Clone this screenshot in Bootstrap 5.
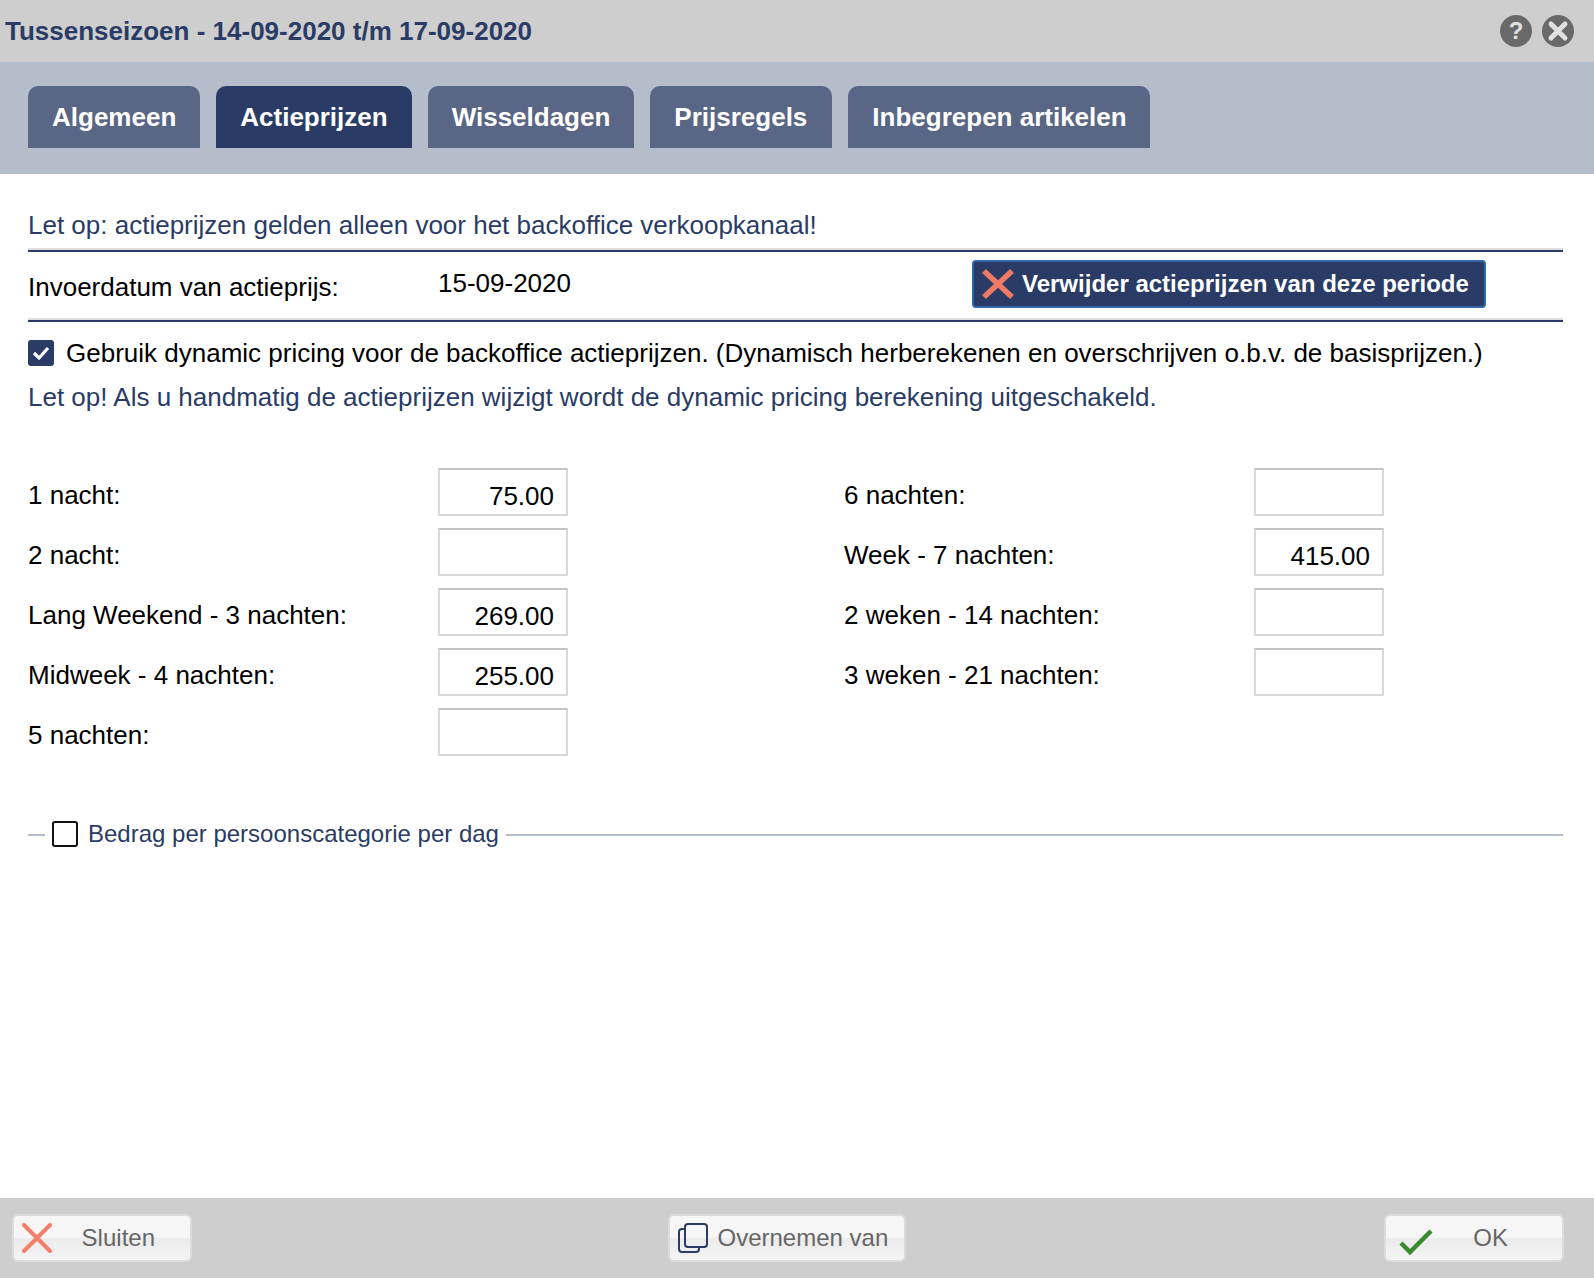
<!DOCTYPE html>
<html lang="nl">
<head>
<meta charset="utf-8">
<title>Tussenseizoen</title>
<link href="https://cdn.jsdelivr.net/npm/bootstrap@5.3.0/dist/css/bootstrap.min.css" rel="stylesheet">
<style>
html,body{margin:0;padding:0;background:#fff}
body{font-family:"Liberation Sans",Arial,sans-serif;color:#000;width:1594px;height:1278px;overflow:hidden;font-size:26px;line-height:30px}
.dlg{width:1594px;height:1278px}
.titlebar{height:62px;background:#cecece;padding:0 20px 0 5px}
.dlg-title{font-size:26px;font-weight:700;color:#2a3c66;margin:0;line-height:62px}
.iconpair{gap:10px}
.round-ic{width:32px;height:32px;border-radius:50%;background:#696969;color:#e0e0e0;font-weight:700;font-size:24px;line-height:32px;text-align:center}
.tabband{height:112px;background:#b5bdcb;padding:24px 28px 0;gap:16px}
.tabitem{height:62px;background:#596685;color:#fff;font-size:26px;font-weight:700;line-height:62px;padding:0 24px;border-radius:10px 10px 0 0}
.tabitem.is-on{background:#2a3c66}
.tabitem.tab-wider{padding-right:25px}
.tabitem.tab-narrower{padding-right:23px}
.pane{padding:0 31px 0 28px}
.note{color:#2a3c66}
.first-note{height:78px;padding-top:36px;border-bottom:2px solid #2a3c66;box-shadow:inset 0 -2px 0 #dedede}
.daterow{height:70px;border-bottom:2px solid #2a3c66;box-shadow:inset 0 -2px 0 #dedede}
.lab{width:410px;flex:none;padding-top:6px}
.datelab{padding-top:2px}
.dateval{width:534px;flex:none;margin-top:-6px}
.delbtn{width:514px;height:48px;margin-bottom:4px;background:#2a3c66;border:2px solid #2f69a8;border-radius:4px;color:#fff;font-weight:700;font-size:24px;padding:0 0 0 8px;gap:8px;white-space:nowrap}
.chk{width:26px;height:26px;flex:none;background:#2a3c66;border-radius:3px}
.dynrow{padding-top:16px;gap:12px;height:46px;white-space:nowrap}
.warn2{margin-top:14px}
.pricegrid{margin-top:56px;row-gap:12px;display:grid;grid-template-columns:816px 1fr}
.pricerow{height:48px}
.pricefield{width:130px;height:48px;border:2px solid #d8d8d8;border-top-color:#c4c4c4;background:#fff;text-align:right;padding:7px 12px 0 0;line-height:38px;border-radius:0}
.lg{margin-top:63px;gap:7px}
.lgline{height:2px;background:#b5bdcb;margin-top:2px}
.lgline-short{width:17px;flex:none}
.lgbox{width:26px;height:26px;flex:none;border:2px solid #111;border-radius:3px;background:#fff}
.lgtext{font-size:24px;color:#2a3c66;white-space:nowrap;margin-left:3px}
.footbar{height:80px;background:#cecece;padding:16px 30px 0 12px}
.fbtn{height:48px;border:2px solid #dcdcdc;border-radius:6px;background:linear-gradient(#f6f6f6 0,#f6f6f6 50%,#ebebeb 50%,#f4f4f4 100%);color:#666;font-size:24px;padding:0;white-space:nowrap}
.fbtn-close{width:180px}
.fbtn-copy{width:238px;margin-right:3px}
.fbtn-ok{width:180px}
.close-label{margin-left:auto;margin-right:35px}
.copy-label{margin-left:10px}
.ok-svg{margin-left:13px;margin-top:8px}
.ok-label{margin-left:auto;margin-right:54px}
</style>
</head>
<body>
<div class="dlg d-flex flex-column">
  <div class="titlebar d-flex justify-content-between align-items-center">
    <h1 class="dlg-title">Tussenseizoen - 14-09-2020 t/m 17-09-2020</h1>
    <div class="iconpair d-flex">
      <div class="round-ic">?</div>
      <div class="round-ic d-flex align-items-center justify-content-center">
        <svg width="22" height="22" viewBox="0 0 22 22"><path d="M4 4 18 18M18 4 4 18" stroke="#e0e0e0" stroke-width="5" stroke-linecap="round"/></svg>
      </div>
    </div>
  </div>
  <div class="tabband d-flex">
    <div class="tabitem">Algemeen</div>
    <div class="tabitem is-on">Actieprijzen</div>
    <div class="tabitem">Wisseldagen</div>
    <div class="tabitem tab-wider">Prijsregels</div>
    <div class="tabitem tab-narrower">Inbegrepen artikelen</div>
  </div>
  <div class="pane flex-grow-1">
    <div class="note first-note">Let op: actieprijzen gelden alleen voor het backoffice verkoopkanaal!</div>
    <div class="daterow d-flex align-items-center">
      <div class="lab datelab">Invoerdatum van actieprijs:</div>
      <div class="dateval">15-09-2020</div>
      <button type="button" class="delbtn d-flex align-items-center">
        <svg width="32" height="30" viewBox="0 0 32 30"><path d="M2 2 30 28M30 2 2 28" stroke="#ef7a66" stroke-width="5.5"/></svg>
        Verwijder actieprijzen van deze periode
      </button>
    </div>
    <div class="dynrow d-flex align-items-center">
      <div class="chk d-flex align-items-center justify-content-center">
        <svg width="18" height="16" viewBox="0 0 18 16"><path d="M2 8 7 13 16 3" fill="none" stroke="#fff" stroke-width="3.2"/></svg>
      </div>
      <div>Gebruik dynamic pricing voor de backoffice actieprijzen. (Dynamisch herberekenen en overschrijven o.b.v. de basisprijzen.)</div>
    </div>
    <div class="note warn2">Let op! Als u handmatig de actieprijzen wijzigt wordt de dynamic pricing berekening uitgeschakeld.</div>
    <div class="pricegrid">
      <div class="pricerow d-flex align-items-center"><div class="lab">1 nacht:</div><div class="pricefield">75.00</div></div>
      <div class="pricerow d-flex align-items-center"><div class="lab">6 nachten:</div><div class="pricefield"></div></div>
      <div class="pricerow d-flex align-items-center"><div class="lab">2 nacht:</div><div class="pricefield"></div></div>
      <div class="pricerow d-flex align-items-center"><div class="lab">Week - 7 nachten:</div><div class="pricefield">415.00</div></div>
      <div class="pricerow d-flex align-items-center"><div class="lab">Lang Weekend - 3 nachten:</div><div class="pricefield">269.00</div></div>
      <div class="pricerow d-flex align-items-center"><div class="lab">2 weken - 14 nachten:</div><div class="pricefield"></div></div>
      <div class="pricerow d-flex align-items-center"><div class="lab">Midweek - 4 nachten:</div><div class="pricefield">255.00</div></div>
      <div class="pricerow d-flex align-items-center"><div class="lab">3 weken - 21 nachten:</div><div class="pricefield"></div></div>
      <div class="pricerow d-flex align-items-center"><div class="lab">5 nachten:</div><div class="pricefield"></div></div>
    </div>
    <div class="lg d-flex align-items-center">
      <div class="lgline lgline-short"></div>
      <div class="lgbox"></div>
      <div class="lgtext">Bedrag per persoonscategorie per dag</div>
      <div class="lgline flex-grow-1"></div>
    </div>
  </div>
  <div class="footbar d-flex justify-content-between">
    <button type="button" class="fbtn fbtn-close d-flex align-items-center">
      <svg class="ms-2" width="30" height="30" viewBox="0 0 30 30"><path d="M2 2 28 28M28 2 2 28" stroke="#f47f68" stroke-width="4" stroke-linecap="round"/></svg>
      <span class="close-label">Sluiten</span>
    </button>
    <button type="button" class="fbtn fbtn-copy d-flex align-items-center">
      <svg class="ms-2" width="30" height="30" viewBox="0 0 30 30" fill="none" stroke="#2a3c66" stroke-width="2"><rect x="7" y="1" width="22" height="23" rx="3"/><path d="M7 6H4a3 3 0 0 0-3 3v17a3 3 0 0 0 3 3h14a3 3 0 0 0 3-3v-2"/></svg>
      <span class="copy-label">Overnemen van</span>
    </button>
    <button type="button" class="fbtn fbtn-ok d-flex align-items-center">
      <svg class="ok-svg" width="34" height="28" viewBox="0 0 34 28"><path d="M2 15 11 24 32 3" fill="none" stroke="#3a8a30" stroke-width="4.5"/></svg>
      <span class="ok-label">OK</span>
    </button>
  </div>
</div>
<script src="https://cdn.jsdelivr.net/npm/bootstrap@5.3.0/dist/js/bootstrap.bundle.min.js"></script>
</body>
</html>
